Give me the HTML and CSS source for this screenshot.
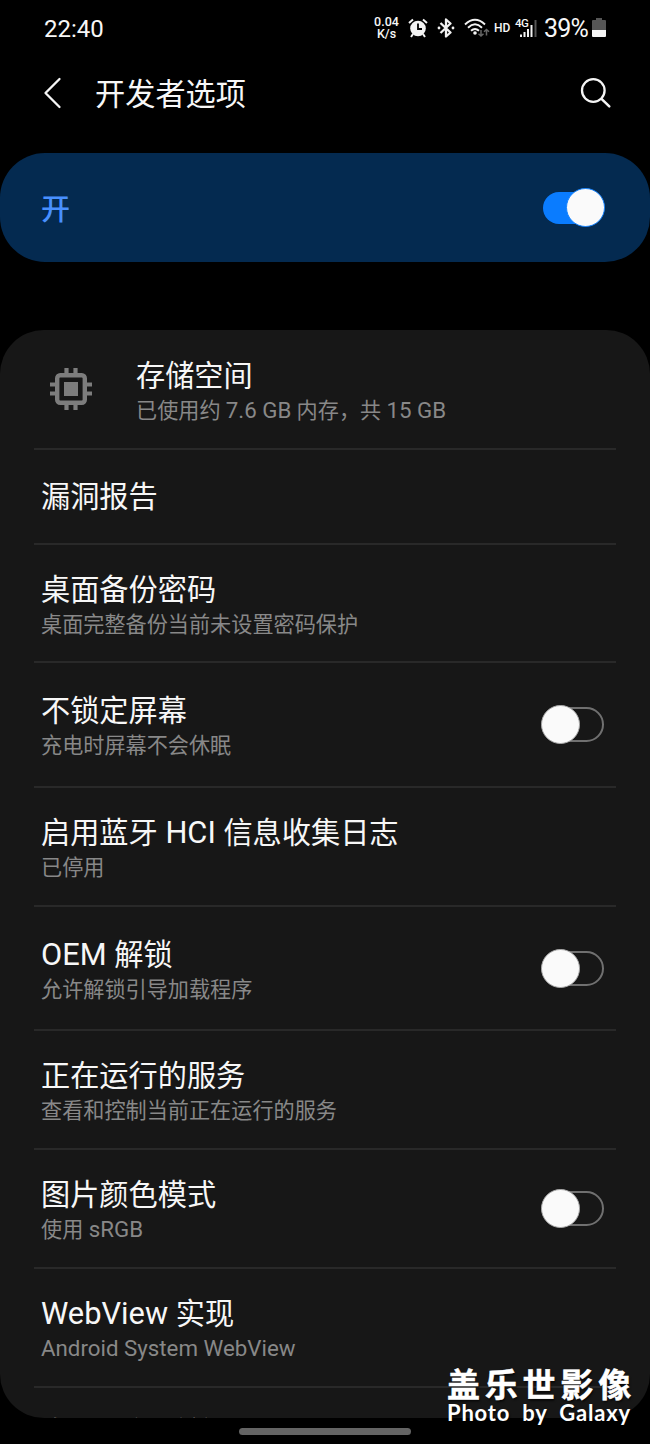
FILE: index.html
```html
<!DOCTYPE html>
<html lang="zh-CN">
<head>
<meta charset="utf-8">
<title>开发者选项</title>
<link rel="stylesheet" href="styles.css">
</head>
<body>
<div class="screen">
  <header class="status">
    <span class="clock">22:40</span>
    <span class="speed"><span>0.04</span><span>K/s</span></span>
    <svg class="alarm" width="20" height="20" viewBox="0 0 20 20"><circle cx="10" cy="10.500" r="7.800" fill="#f2f2f2"/><path d="M1 5 5 1.500M19 5 15 1.500M5 16l-2 3M15 16l2 3" stroke="#f2f2f2" stroke-width="2" fill="none"/><path d="M10 5.500v5.500h4" stroke="#000" stroke-width="1.800" fill="none"/></svg>
    <svg class="bluetooth" width="18" height="20" viewBox="0 0 18 20"><path d="M3.500 5 13.500 14.500 9 18.500V1.500l4.500 4L3.500 15" stroke="#f2f2f2" stroke-width="2.300" fill="none" stroke-linejoin="round"/><circle cx="2" cy="10" r="1.400" fill="#f2f2f2"/><circle cx="16" cy="10" r="1.400" fill="#f2f2f2"/></svg>
    <svg class="wifi" width="26" height="20" viewBox="0 0 26 20"><g stroke="#f2f2f2" stroke-width="1.900" fill="none"><path d="M1 6.500Q11-3 21 6.500"/><path d="M4 9.700Q11 3 18 9.700"/><path d="M7 12.800Q11 9 15 12.800"/></g><circle cx="11" cy="15" r="1.800" fill="#f2f2f2"/><path d="M17 12v6m-2.500-2.300L17 18l2.500-2.300M22.500 17.500v-6M20 13.800l2.500-2.300 2.500 2.300" stroke="#666" stroke-width="1.500" fill="none"/></svg>
    <span class="hd">HD</span>
    <span class="signal"><span class="net">4G</span><svg width="18" height="17" viewBox="0 0 18 17"><path d="M2 14.500V17M5.500 12v5M9 9v8M12.500 5v12" stroke="#f2f2f2" stroke-width="2"/><path d="M16.500 0v17" stroke="#555" stroke-width="2"/></svg></span>
    <span class="percent">39%</span>
    <svg class="battery" width="14" height="20" viewBox="0 0 14 20"><path d="M4 0h6v2h3q1 0 1 1v9H0V3q0-1 1-1h3z" fill="#565656"/><path d="M0 12h14v6q0 1-1 1H1q-1 0-1-1z" fill="#f5f5f5"/></svg>
  </header>

  <nav class="appbar">
    <svg class="back" width="20" height="34" viewBox="0 0 20 34"><path d="M17.500 2 3.500 16l14 14" stroke="#f5f5f5" stroke-width="2.300" fill="none" stroke-linecap="round" stroke-linejoin="round"/></svg>
    <h1>开发者选项</h1>
    <svg class="search" width="32" height="32" viewBox="0 0 32 32"><circle cx="13.300" cy="12.500" r="11.300" stroke="#f5f5f5" stroke-width="2.300" fill="none"/><path d="m21.500 20.800 7.800 7.600" stroke="#f5f5f5" stroke-width="2.500" stroke-linecap="round"/></svg>
  </nav>

  <section class="master"><span class="state">开</span><span class="toggle on"></span></section>

  <main class="card">
    <div class="row storage">
      <svg class="chip" width="42" height="42" viewBox="0 0 42 42"><rect x="7.200" y="7.200" width="27.600" height="27.600" rx="3" fill="none" stroke="#7d7d7d" stroke-width="4.400"/><rect x="14" y="14" width="14" height="14" fill="#7d7d7d"/><path d="M16.500 0v6M25.500 0v6M16.500 36v6M25.500 36v6M0 16.500h6M0 25.500h6M36 16.500h6M36 25.500h6" stroke="#7d7d7d" stroke-width="4.200"/></svg>
      <div class="text"><h2>存储空间</h2><p>已使用约 <span class="latin">7.6 GB</span> 内存，共 <span class="latin">15 GB</span></p></div>
    </div>
    <div class="row single"><div class="text"><h2>漏洞报告</h2></div></div>
    <div class="row"><div class="text"><h2>桌面备份密码</h2><p>桌面完整备份当前未设置密码保护</p></div></div>
    <div class="row tall"><div class="text"><h2>不锁定屏幕</h2><p>充电时屏幕不会休眠</p></div><span class="toggle"></span></div>
    <div class="row"><div class="text"><h2>启用蓝牙<span class="latin"> HCI </span>信息收集日志</h2><p>已停用</p></div></div>
    <div class="row tall"><div class="text"><h2><span class="latin">OEM </span>解锁</h2><p>允许解锁引导加载程序</p></div><span class="toggle"></span></div>
    <div class="row"><div class="text"><h2>正在运行的服务</h2><p>查看和控制当前正在运行的服务</p></div></div>
    <div class="row"><div class="text"><h2>图片颜色模式</h2><p>使用<span class="latin"> sRGB</span></p></div><span class="toggle"></span></div>
    <div class="row"><div class="text"><h2><span class="latin">WebView </span>实现</h2><p><span class="latin">Android System WebView</span></p></div></div>
    <div class="row partial"><div class="text"><h2>自动更新系统</h2></div></div>
  </main>
  <div class="homebar"></div>
  <div class="watermark"><strong>盖乐世影像</strong><span>Photo by Galaxy</span></div>
</div>
</body>
</html>
```
FILE: styles.css
```css
* { box-sizing: border-box; }
body { margin: 0; background: #000; }
h1, h2, p { margin: 0; font-weight: 400; }
.screen {
  position: relative;
  width: 650px;
  height: 1444px;
  overflow: hidden;
  background: #000;
  color: #f7f7f7;
  font-family: Roboto, "Noto Sans CJK SC", sans-serif;
  white-space: nowrap;
}
.status { display: flex; align-items: center; height: 56px; padding: 0 44px; }
.clock { width: 329px; padding-top: 1px; font-size: 24px; letter-spacing: 0; }
.speed { display: flex; flex-direction: column; align-items: center; width: 27px; font-size: 12.500px; font-weight: 500; line-height: 12px; }
.alarm { margin-left: 8px; }
.bluetooth { margin-left: 9px; }
.wifi { margin-left: 9px; }
.hd { margin-left: 4px; font-size: 12px; font-weight: 500; width: 20px; }
.signal { position: relative; display: flex; align-items: flex-end; width: 22px; height: 20px; padding-left: 4px; margin-left: 1px; padding-bottom: 1px; }
.net { position: absolute; left: 0; top: 0; font-size: 11.500px; font-weight: 500; line-height: 10px; letter-spacing: -0.5px; text-shadow: 0 0 1px #000; }
.percent { width: 47px; margin-left: 7px; padding-top: 1px; font-size: 25px; letter-spacing: -0.8px; }
.battery { flex-shrink: 0; margin-left: 1px; }
.appbar { display: flex; align-items: center; height: 97px; padding: 0 38px 21px 42px; }
.appbar h1 { flex: 1; margin-left: 33px; padding-top: 2px; font-size: 30.200px; line-height: 40px; }
.master {
  display: flex;
  align-items: center;
  justify-content: space-between;
  height: 109px;
  padding: 0 46px 0 41px;
  border-radius: 45px;
  background: #042a50;
  color: #4890ff;
  font-size: 29px;
  font-weight: 500;
}
.state { padding-bottom: 2px; }
.toggle {
  display: flex;
  align-items: center;
  flex-shrink: 0;
  width: 62px;
  height: 35px;
  margin-bottom: 3px;
  border: 2px solid #707070;
  border-radius: 18px;
}
.toggle::before {
  content: "";
  flex-shrink: 0;
  width: 37px;
  height: 37px;
  margin-left: -3px;
  border: 1px solid #aaa;
  border-radius: 50%;
  background: #fafafa;
}
.toggle.on { width: 61px; height: 32px; margin-bottom: 0; justify-content: flex-end; border: 0; background: #0a7cff; }
.toggle.on::before { margin-right: -1px; border-color: #1683ff; }
.card {
  height: 1088px;
  margin-top: 68px;
  padding: 0 34px;
  overflow: hidden;
  border-radius: 44px;
  background: #171717;
}
.row {
  display: flex;
  align-items: center;
  justify-content: space-between;
  height: 118.800px;
  padding: 3.500px 12px 0 7px;
  border-bottom: 2px solid #292929;
}
.row.storage { height: 119.500px; justify-content: flex-start; padding: 0 0 0 16px; }
.chip { margin-right: 44px; }
.row.storage .text { padding-top: 4px; }
.row.single { height: 95px; padding-top: 1px; }
.row.tall { height: 124.600px; padding-top: 3.500px; }
.row.partial { height: 80px; align-items: flex-start; border: 0; padding-top: 25.200px; }
.row h2 { height: 40px; font-size: 29.200px; line-height: 40px; }
.row p { height: 30px; font-size: 21.150px; line-height: 30px; color: #888; }
.row .latin { font-size: 1.055em; line-height: 1; white-space: pre; }
.homebar {
  position: absolute;
  left: 239px;
  top: 1428px;
  width: 172px;
  height: 7px;
  border-radius: 4px;
  background: #646464;
}
.watermark {
  position: absolute;
  left: 447px;
  top: 1366px;
  display: flex;
  flex-direction: column;
  color: #fff;
  text-shadow: 1px 2px 2px #000a;
}
.watermark strong { font-size: 33px; line-height: 40px; font-weight: 700; letter-spacing: 4.800px; -webkit-text-stroke: 0.5px #fff; }
.watermark span { font-family: Lato, sans-serif; font-size: 22px; line-height: 14px; font-weight: 700; letter-spacing: 0.800px; word-spacing: 6px; }
```
